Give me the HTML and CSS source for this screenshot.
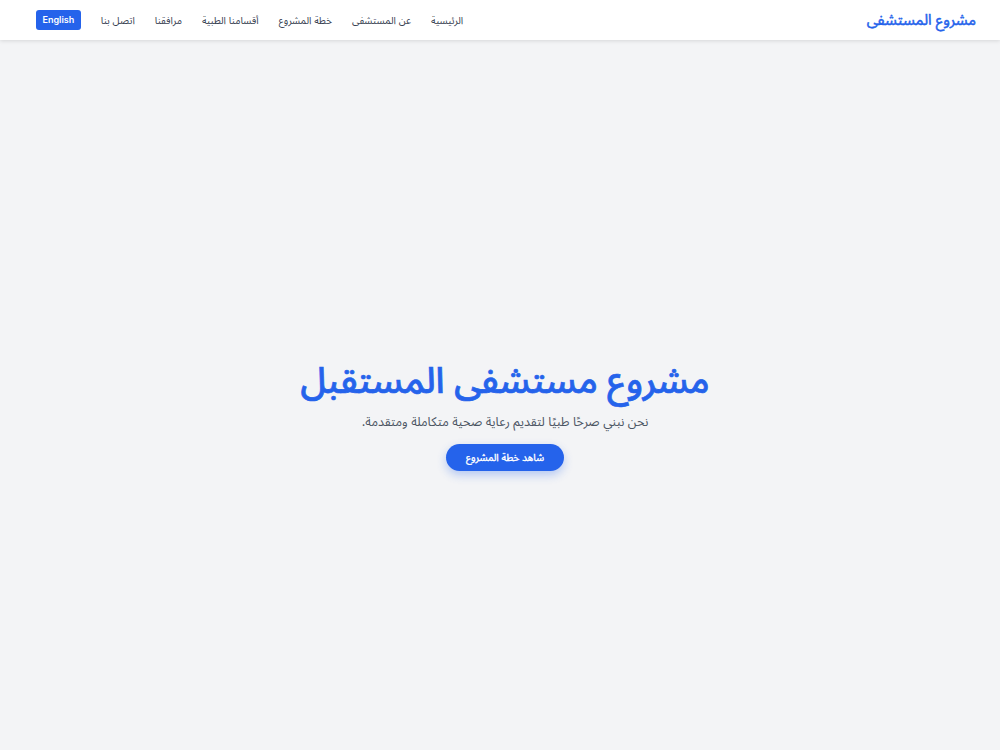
FILE: index.html
```html
<!DOCTYPE html>
<html lang="ar" dir="rtl">
<head>
    <meta charset="UTF-8">
    <meta name="viewport" content="width=device-width, initial-scale=1.0">
    <title>مشروع المستشفى</title>
    <link rel="stylesheet" href="styles.css">
</head>
<body>
    <header class="site-header">
        <a href="#" class="logo">مشروع المستشفى</a>
        <nav class="main-nav">
            <a href="#">الرئيسية</a>
            <a href="#">عن المستشفى</a>
            <a href="#">خطة المشروع</a>
            <a href="#">أقسامنا الطبية</a>
            <a href="#">مرافقنا</a>
            <a href="#">اتصل بنا</a>
            <button class="lang-btn">English</button>
        </nav>
    </header>

    <section class="hero">
        <h1 class="hero-title">مشروع مستشفى المستقبل</h1>
        <p class="hero-text">نحن نبني صرحًا طبيًا لتقديم رعاية صحية متكاملة ومتقدمة.</p>
        <a href="#" class="hero-btn">شاهد خطة المشروع</a>
    </section>
</body>
</html>
```

FILE: styles.css
```css
body {
    margin: 0;
    font-family: Inter, "Noto Sans Arabic", "Noto Naskh Arabic", sans-serif;
    background: #f3f4f6;
    color: #1f2937;
}

a {
    text-decoration: none;
}

.site-header {
    height: 40px;
    background: #fff;
    box-shadow: 0 1px 4px rgba(0,0,0,0.12);
    display: flex;
    align-items: center;
    justify-content: space-between;
    padding: 0 24px 0 36px;
    position: relative;
    z-index: 10;
}

/* a thin stroke thickens the arabic words without widening them */
.logo {
    color: #2563eb;
    font-size: 14.8px;
    line-height: 20px;
    -webkit-text-stroke: 0.5px #2563eb;
}

.main-nav {
    display: flex;
    align-items: center;
    gap: 20px;
}

.main-nav a {
    color: #374151;
    font-size: 10px;
}

.lang-btn {
    font-family: inherit;
    background: #2563eb;
    color: #fff;
    border: none;
    border-radius: 3px;
    font-size: 9px;
    font-weight: 600;
    line-height: 12px;
    padding: 4px 6.5px;
}

.hero {
    min-height: calc(100vh - 40px);
    box-sizing: border-box;
    padding: 38px 0 0 10px;
    display: flex;
    flex-direction: column;
    align-items: center;
    justify-content: center;
    text-align: center;
}

.hero-title {
    margin: 0 0 10px;
    color: #2563eb;
    font-size: 36px;
    font-weight: 500;
    line-height: 44px;
    -webkit-text-stroke: 0.7px #2563eb;
}

.hero-text {
    margin: 0 0 12px;
    color: #4b5563;
    font-size: 12.5px;
    line-height: 20px;
}

.hero-btn {
    display: inline-block;
    background: #2563eb;
    color: #fff;
    font-size: 10px;
    line-height: 15px;
    padding: 6px 19.5px;
    border-radius: 999px;
    -webkit-text-stroke: 0.35px #fff;
    box-shadow: 0 4px 10px rgba(37,99,235,0.3);
}
```
